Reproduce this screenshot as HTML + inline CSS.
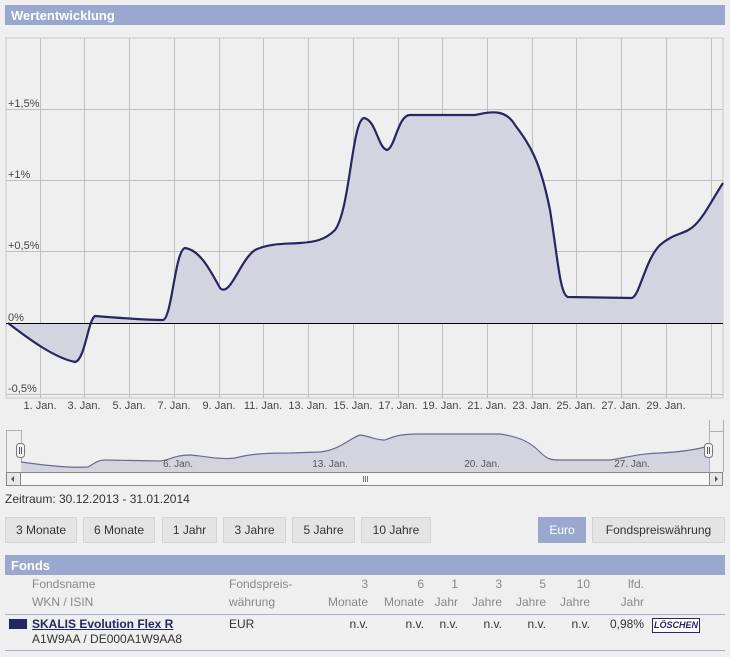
<!DOCTYPE html>
<html><head><meta charset="utf-8">
<style>
*{margin:0;padding:0;box-sizing:border-box}
body{width:730px;height:657px;background:#efefef;font-family:"Liberation Sans",Arial,sans-serif;font-size:12px;color:#333;position:relative;overflow:hidden}
.bar{position:absolute;left:5px;width:720px;height:20px;background:#9aa8d0;color:#fff;font-weight:bold;font-size:13px;padding:3px 0 0 6px}
.btn{position:absolute;top:517px;height:26px;background:#e4e4e4;border:1px solid #d4d4d4;color:#333;font-size:12px;text-align:center;line-height:24px}
.t{position:absolute;font-size:12px;color:#888;white-space:nowrap}
.v{position:absolute;font-size:12px;color:#333;white-space:nowrap}
</style></head><body>
<div class="bar" style="top:5px">Wertentwicklung</div>

<svg style="position:absolute;left:0;top:0" width="730" height="500">
<rect x="6" y="38" width="717" height="360" fill="#efefef" stroke="#c8c8c8"/>
<g stroke="#c0c0c0" stroke-width="1">
<line x1="40.5" y1="38" x2="40.5" y2="398"/><line x1="84.5" y1="38" x2="84.5" y2="398"/><line x1="129.5" y1="38" x2="129.5" y2="398"/><line x1="174.5" y1="38" x2="174.5" y2="398"/><line x1="219.5" y1="38" x2="219.5" y2="398"/><line x1="263.5" y1="38" x2="263.5" y2="398"/><line x1="308.5" y1="38" x2="308.5" y2="398"/><line x1="353.5" y1="38" x2="353.5" y2="398"/><line x1="398.5" y1="38" x2="398.5" y2="398"/><line x1="442.5" y1="38" x2="442.5" y2="398"/><line x1="487.5" y1="38" x2="487.5" y2="398"/><line x1="532.5" y1="38" x2="532.5" y2="398"/><line x1="576.5" y1="38" x2="576.5" y2="398"/><line x1="621.5" y1="38" x2="621.5" y2="398"/><line x1="666.5" y1="38" x2="666.5" y2="398"/><line x1="711.5" y1="38" x2="711.5" y2="398"/>
<line x1="6" y1="109.5" x2="723" y2="109.5"/><line x1="6" y1="180.5" x2="723" y2="180.5"/><line x1="6" y1="251.5" x2="723" y2="251.5"/><line x1="6" y1="394.5" x2="723" y2="394.5"/>
</g>
<path d="M8,323 C30,340 55,358 75,362 C85,360 88,320 95,316 C120,318 150,320 163,320 C172,318 175,250 185,248 C200,250 210,270 220,288 C230,298 240,260 255,250 C270,243 285,244 300,243 C315,242 325,240 335,230 C350,210 352,120 364,118 C376,120 378,148 387,150 C395,148 398,115 410,115 L475,115 C490,112 505,108 515,125 C530,145 540,160 550,210 C558,260 560,295 568,297 L632,298 C640,295 645,260 660,245 C675,232 685,235 695,225 C705,215 712,200 723,183 L723,323 Z" fill="#d3d4e0"/>
<line x1="6" y1="323.5" x2="723" y2="323.5" stroke="#000"/>
<path d="M8,323 C30,340 55,358 75,362 C85,360 88,320 95,316 C120,318 150,320 163,320 C172,318 175,250 185,248 C200,250 210,270 220,288 C230,298 240,260 255,250 C270,243 285,244 300,243 C315,242 325,240 335,230 C350,210 352,120 364,118 C376,120 378,148 387,150 C395,148 398,115 410,115 L475,115 C490,112 505,108 515,125 C530,145 540,160 550,210 C558,260 560,295 568,297 L632,298 C640,295 645,260 660,245 C675,232 685,235 695,225 C705,215 712,200 723,183" fill="none" stroke="#262660" stroke-width="2.2"/>
<g font-family="Liberation Sans,Arial,sans-serif" font-size="11" fill="#444">
<text x="8" y="107">+1,5%</text><text x="8" y="178">+1%</text><text x="8" y="249">+0,5%</text><text x="8" y="321">0%</text><text x="8" y="392">-0,5%</text>
<g text-anchor="middle"><text x="40" y="409">1. Jan.</text><text x="84" y="409">3. Jan.</text><text x="129" y="409">5. Jan.</text><text x="174" y="409">7. Jan.</text><text x="219" y="409">9. Jan.</text><text x="263" y="409">11. Jan.</text><text x="308" y="409">13. Jan.</text><text x="353" y="409">15. Jan.</text><text x="398" y="409">17. Jan.</text><text x="442" y="409">19. Jan.</text><text x="487" y="409">21. Jan.</text><text x="532" y="409">23. Jan.</text><text x="576" y="409">25. Jan.</text><text x="621" y="409">27. Jan.</text><text x="666" y="409">29. Jan.</text></g>
</g>
<!-- navigator -->
<line x1="6.5" y1="430" x2="6.5" y2="472" stroke="#b0b0b0"/><line x1="6" y1="430.5" x2="21" y2="430.5" stroke="#b0b0b0"/>
<line x1="21.5" y1="430" x2="21.5" y2="472" stroke="#b0b0b0"/>
<line x1="709.5" y1="420" x2="709.5" y2="472" stroke="#b0b0b0"/><line x1="709" y1="431.5" x2="723" y2="431.5" stroke="#b0b0b0"/><line x1="723.5" y1="420" x2="723.5" y2="472" stroke="#b0b0b0"/>
<path d="M21,462 C50,466 70,468 88,467 C95,463 98,460 105,460 L160,461 C170,460 175,455 190,455 C205,456 220,460 235,458 C250,454 265,453 290,453 L320,452 C340,450 350,438 360,435 C370,436 375,440 385,440 C395,436 400,434 420,434 L500,434 C520,437 530,442 540,452 C548,460 552,460 560,460 L610,460 C625,458 635,454 660,453 C680,452 695,450 709,446 L709,472 L21,472 Z" fill="#d3d4e0"/>
<path d="M21,462 C50,466 70,468 88,467 C95,463 98,460 105,460 L160,461 C170,460 175,455 190,455 C205,456 220,460 235,458 C250,454 265,453 290,453 L320,452 C340,450 350,438 360,435 C370,436 375,440 385,440 C395,436 400,434 420,434 L500,434 C520,437 530,442 540,452 C548,460 552,460 560,460 L610,460 C625,458 635,454 660,453 C680,452 695,450 709,446" fill="none" stroke="#6a6a90" stroke-width="1.2"/>
<g font-family="Liberation Sans,Arial,sans-serif" font-size="10" fill="#555" text-anchor="middle"><text x="178" y="467">6. Jan.</text><text x="330" y="467">13. Jan.</text><text x="482" y="467">20. Jan.</text><text x="632" y="467">27. Jan.</text></g>
<rect x="16.5" y="443.5" width="8" height="14" rx="3" fill="#f4f4f4" stroke="#777"/><line x1="19.5" y1="447" x2="19.5" y2="454" stroke="#555"/><line x1="21.5" y1="447" x2="21.5" y2="454" stroke="#555"/>
<rect x="704.5" y="443.5" width="8" height="14" rx="3" fill="#f4f4f4" stroke="#777"/><line x1="707.5" y1="447" x2="707.5" y2="454" stroke="#555"/><line x1="709.5" y1="447" x2="709.5" y2="454" stroke="#555"/>
<!-- scrollbar -->
<rect x="6.5" y="472.5" width="716" height="13" fill="#f7f7f7" stroke="#888"/>
<rect x="6.5" y="472.5" width="14" height="13" fill="#e8e8e8" stroke="#888"/>
<rect x="709.5" y="472.5" width="13" height="13" fill="#e8e8e8" stroke="#888"/>
<path d="M14,476 L11,479 L14,482 Z" fill="#555"/><path d="M715,476 L718,479 L715,482 Z" fill="#555"/>
<line x1="363.5" y1="476" x2="363.5" y2="482" stroke="#777"/><line x1="365.5" y1="476" x2="365.5" y2="482" stroke="#777"/><line x1="367.5" y1="476" x2="367.5" y2="482" stroke="#777"/>
</svg>

<div class="v" style="left:5px;top:492px;font-size:12px">Zeitraum: 30.12.2013 - 31.01.2014</div>

<div class="btn" style="left:5px;width:72px">3 Monate</div>
<div class="btn" style="left:83px;width:72px">6 Monate</div>
<div class="btn" style="left:162px;width:55px">1 Jahr</div>
<div class="btn" style="left:223px;width:63px">3 Jahre</div>
<div class="btn" style="left:292px;width:63px">5 Jahre</div>
<div class="btn" style="left:361px;width:70px">10 Jahre</div>
<div class="btn" style="left:538px;width:48px;background:#9aa8d0;border-color:#9aa8d0;color:#fff">Euro</div>
<div class="btn" style="left:592px;width:133px">Fondspreiswährung</div>

<div class="bar" style="top:555px">Fonds</div>
<div class="t" style="left:32px;top:577px">Fondsname</div>
<div class="t" style="left:32px;top:595px">WKN / ISIN</div>
<div class="t" style="left:229px;top:577px">Fondspreis-</div>
<div class="t" style="left:229px;top:595px">währung</div>
<div class="t" style="right:362px;top:577px">3</div><div class="t" style="right:362px;top:595px">Monate</div>
<div class="t" style="right:306px;top:577px">6</div><div class="t" style="right:306px;top:595px">Monate</div>
<div class="t" style="right:272px;top:577px">1</div><div class="t" style="right:272px;top:595px">Jahr</div>
<div class="t" style="right:228px;top:577px">3</div><div class="t" style="right:228px;top:595px">Jahre</div>
<div class="t" style="right:184px;top:577px">5</div><div class="t" style="right:184px;top:595px">Jahre</div>
<div class="t" style="right:140px;top:577px">10</div><div class="t" style="right:140px;top:595px">Jahre</div>
<div class="t" style="right:86px;top:577px">lfd.</div><div class="t" style="right:86px;top:595px">Jahr</div>
<div style="position:absolute;left:5px;top:614px;width:720px;height:1px;background:#a8aed0"></div>
<div style="position:absolute;left:9px;top:619px;width:18px;height:10px;background:#262660"></div>
<div class="v" style="left:32px;top:617px;font-weight:bold;color:#262660;text-decoration:underline">SKALIS Evolution Flex R</div>
<div class="v" style="left:32px;top:632px">A1W9AA / DE000A1W9AA8</div>
<div class="v" style="left:229px;top:617px">EUR</div>
<div class="v" style="right:362px;top:617px">n.v.</div>
<div class="v" style="right:306px;top:617px">n.v.</div>
<div class="v" style="right:272px;top:617px">n.v.</div>
<div class="v" style="right:228px;top:617px">n.v.</div>
<div class="v" style="right:184px;top:617px">n.v.</div>
<div class="v" style="right:140px;top:617px">n.v.</div>
<div class="v" style="right:86px;top:617px">0,98%</div>
<div style="position:absolute;left:652px;top:618px;width:48px;height:15px;border:1px solid #262660;background:#fff;color:#262660;font-size:9px;font-weight:bold;font-style:italic;text-align:center;line-height:13px">LÖSCHEN</div>
<div style="position:absolute;left:5px;top:650px;width:720px;height:1px;background:#a8aed0"></div>
</body></html>
